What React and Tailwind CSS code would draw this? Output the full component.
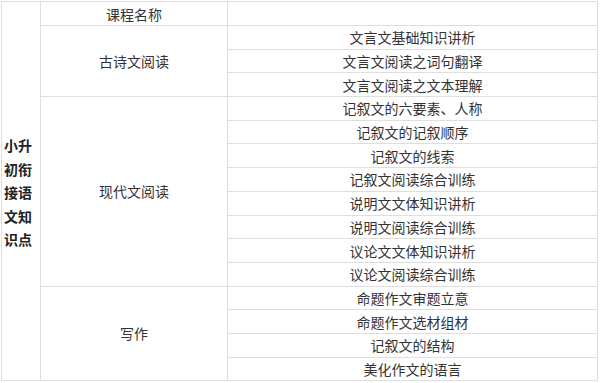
import React from "react";

const groups = [
  { name: "古诗文阅读", items: ["文言文基础知识讲析", "文言文阅读之词句翻译", "文言文阅读之文本理解"] },
  {
    name: "现代文阅读",
    items: [
      "记叙文的六要素、人称",
      "记叙文的记叙顺序",
      "记叙文的线索",
      "记叙文阅读综合训练",
      "说明文文体知识讲析",
      "说明文阅读综合训练",
      "议论文文体知识讲析",
      "议论文阅读综合训练",
    ],
  },
  { name: "写作", items: ["命题作文审题立意", "命题作文选材组材", "记叙文的结构", "美化作文的语言"] },
];

const cell = "border border-[#dedede] text-center align-middle p-0";

export default function App() {
  return (
    <div className="bg-white w-[600px] h-[383px] pt-px pl-px" style={{ fontFamily: '"Noto Sans CJK SC", sans-serif' }}>
      <table className="border-collapse table-fixed w-[597px] text-[14px] text-[#333] leading-none">
        <colgroup>
          <col className="w-[39px]" />
          <col className="w-[187px]" />
          <col />
        </colgroup>
        <tbody>
          <tr className="h-[24px]">
            <td rowSpan={16} className="border border-[#dedede] align-middle p-0 pl-[2px]">
              <div className="w-[30px] font-bold text-[#222] leading-[23.5px] mt-[4px]">
                小升<br />初衔<br />接语<br />文知<br />识点
              </div>
            </td>
            <td className={cell}>课程名称</td>
            <td className={cell}></td>
          </tr>
          {groups.map((g) =>
            g.items.map((item, i) => (
              <tr key={item} className="h-[23.7px]">
                {i === 0 && (
                  <td rowSpan={g.items.length} className={cell}>
                    {g.name}
                  </td>
                )}
                <td className={cell}>{item}</td>
              </tr>
            ))
          )}
        </tbody>
      </table>
    </div>
  );
}
